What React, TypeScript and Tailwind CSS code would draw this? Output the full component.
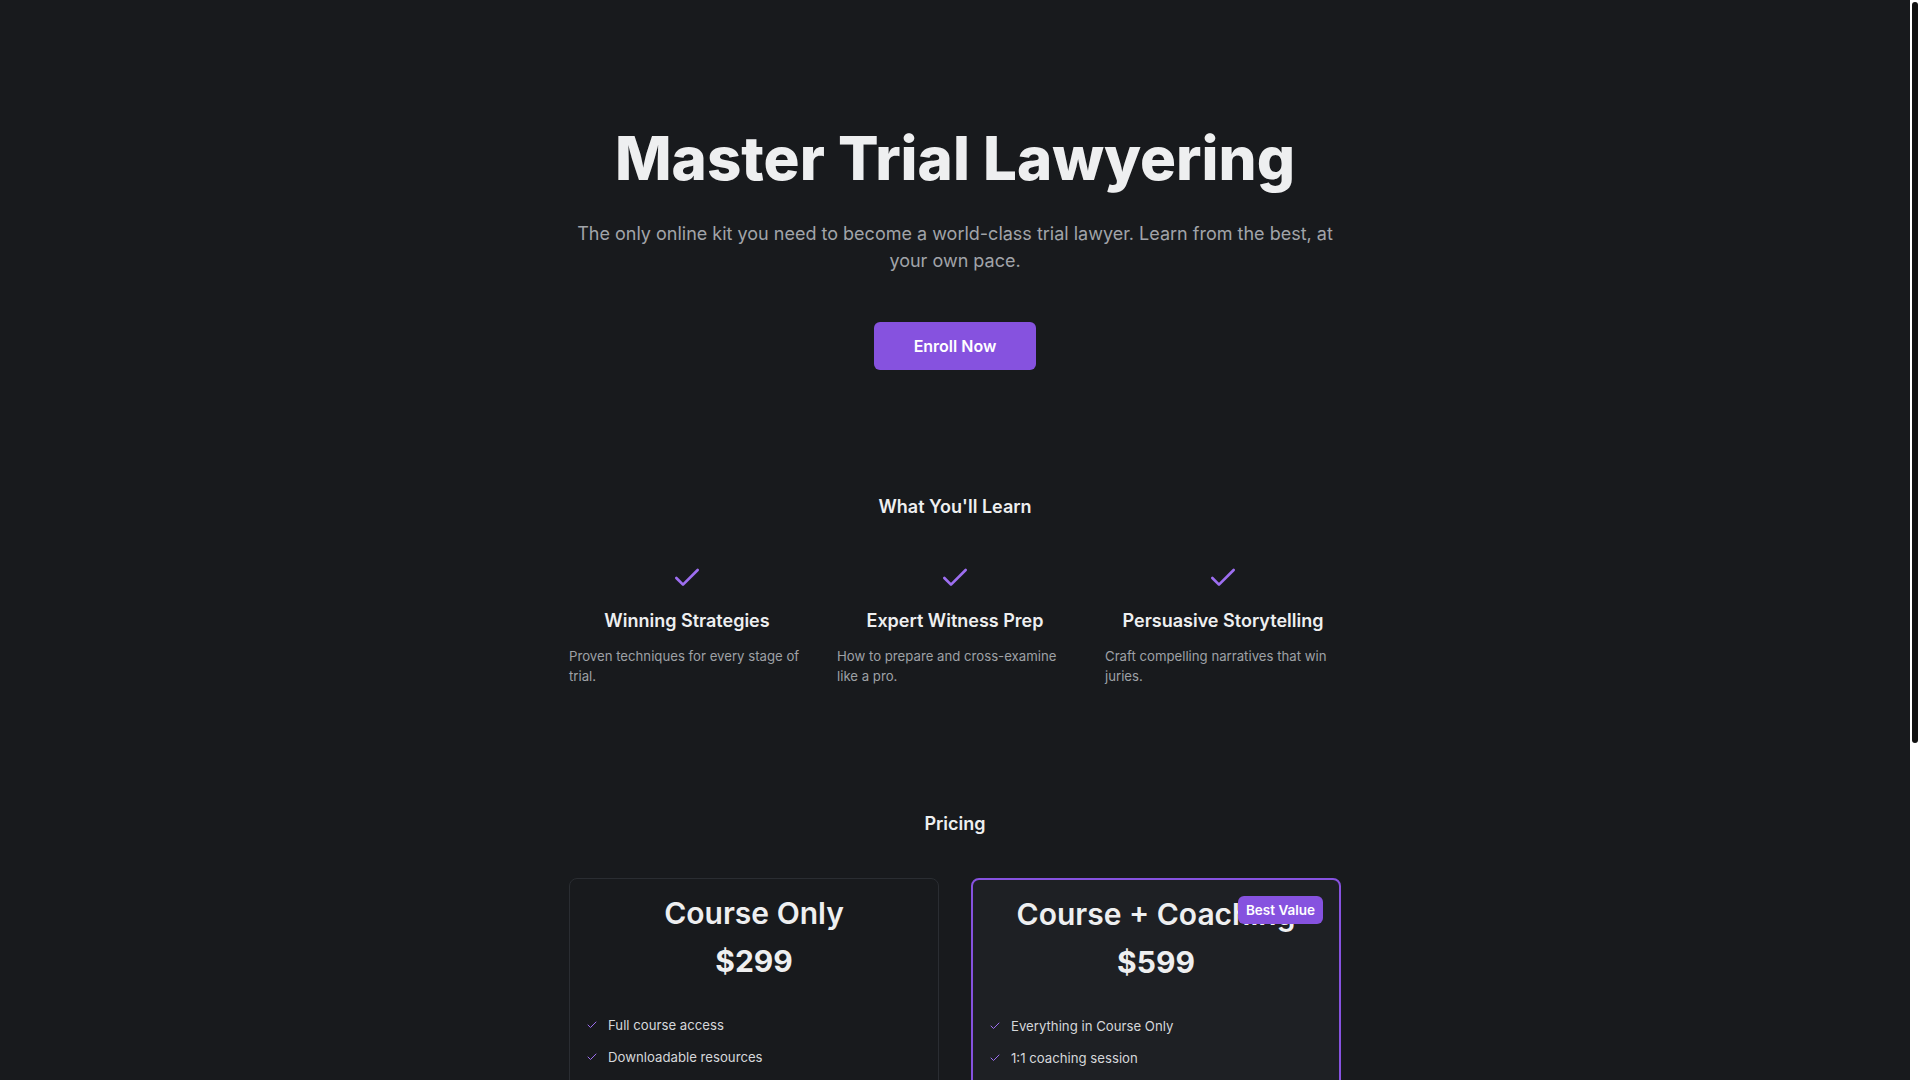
import React from "react";
import { Check } from "lucide-react";

const features = [
  {
    title: "Winning Strategies",
    desc: "Proven techniques for every stage of trial.",
  },
  {
    title: "Expert Witness Prep",
    desc: "How to prepare and cross-examine like a pro.",
  },
  {
    title: "Persuasive Storytelling",
    desc: "Craft compelling narratives that win juries.",
  },
];

function ListItem({ children }: { children: React.ReactNode }) {
  return (
    <li className="flex items-center gap-2.5 text-[13.2px] leading-5 text-[#d5d7da]">
      <Check className="h-3 w-3 shrink-0 text-[#9d6ef0]" strokeWidth={2} />
      <span>{children}</span>
    </li>
  );
}

export default function App() {
  return (
    <div className="flex h-screen bg-[#181a1d] font-['Inter',sans-serif]">
      <div className="min-w-0 flex-1 overflow-y-auto [scrollbar-width:none]">
        <main className="mx-auto max-w-[772px] pt-32 pb-32">
          <section className="text-center">
            <h1 className="text-6xl font-extrabold text-[#eeeff0]">
              Master Trial Lawyering
            </h1>
            <p className="mt-8 text-lg/[27px] text-[#a1a4a9]">
              The only online kit you need to become a world-class trial lawyer.
              Learn from the best, at your own pace.
            </p>
            <button className="mt-12 inline-block rounded-md bg-[#8652df] px-10 py-3 text-base font-semibold text-white">
              Enroll Now
            </button>
          </section>

          <section className="mt-[123px]">
            <h2 className="text-center text-lg font-semibold text-[#eeeff0]">
              What You'll Learn
            </h2>
            <div className="mt-[41px] grid grid-cols-3 gap-8">
              {features.map((f) => (
                <div key={f.title} className="flex flex-col items-center">
                  <Check className="h-8 w-8 text-[#9d6ef0]" strokeWidth={2} />
                  <h3 className="mt-[13px] text-center text-lg font-semibold text-[#eeeff0]">
                    {f.title}
                  </h3>
                  <p className="mt-[11px] self-stretch text-left text-[13.2px] leading-5 text-[#9ea1a6]">
                    {f.desc}
                  </p>
                </div>
              ))}
            </div>
          </section>

          <section className="mt-[124px]">
            <h2 className="text-center text-lg font-semibold text-[#eeeff0]">
              Pricing
            </h2>
            <div className="mt-10 grid grid-cols-2 gap-8">
              <div className="rounded-lg border border-[#2a2d32] bg-[#181a1d] p-4 text-center">
                <h3 className="text-3xl font-semibold text-[#eeeff0]">Course Only</h3>
                <div className="mt-3 text-3xl font-bold text-[#eeeff0]">$299</div>
                <ul className="mt-9 space-y-3 text-left">
                  <ListItem>Full course access</ListItem>
                  <ListItem>Downloadable resources</ListItem>
                  <ListItem>Community forum access</ListItem>
                </ul>
                <button className="mt-8 w-full rounded-md border border-[#8652df] py-2 text-sm font-semibold text-[#eeeff0]">
                  Choose Plan
                </button>
              </div>
              <div className="relative rounded-lg border-2 border-[#8652df] bg-[#1e2024] p-4 text-center">
                <h3 className="text-3xl font-semibold text-[#eeeff0]">
                  Course + Coaching
                </h3>
                <span className="absolute right-4 top-4 rounded-md bg-[#8652df] px-2 py-1.5 text-[13.5px]/4 font-semibold text-white">
                  Best Value
                </span>
                <div className="mt-3 text-3xl font-bold text-[#eeeff0]">$599</div>
                <ul className="mt-9 space-y-3 text-left">
                  <ListItem>Everything in Course Only</ListItem>
                  <ListItem>1:1 coaching session</ListItem>
                  <ListItem>Personalized mock trial feedback</ListItem>
                </ul>
                <button className="mt-8 w-full rounded-md bg-[#8652df] py-2 text-sm font-semibold text-white">
                  Choose Plan
                </button>
              </div>
            </div>
          </section>

          <section className="mt-[123px] text-center">
            <h2 className="text-lg font-semibold text-[#eeeff0]">
              Ready to win your next case?
            </h2>
            <p className="mt-3 text-sm text-[#9ea1a6]">
              Join thousands of attorneys sharpening their courtroom skills.
            </p>
            <button className="mt-6 inline-block rounded-md bg-[#8652df] px-10 py-3 text-base font-semibold text-white">
              Enroll Now
            </button>
          </section>
        </main>
      </div>
      <div aria-hidden="true" className="w-[10px] shrink-0 bg-white px-[2px] pt-[2px]">
        <div className="h-[741px] rounded-full bg-[#111111]" />
      </div>
    </div>
  );
}
